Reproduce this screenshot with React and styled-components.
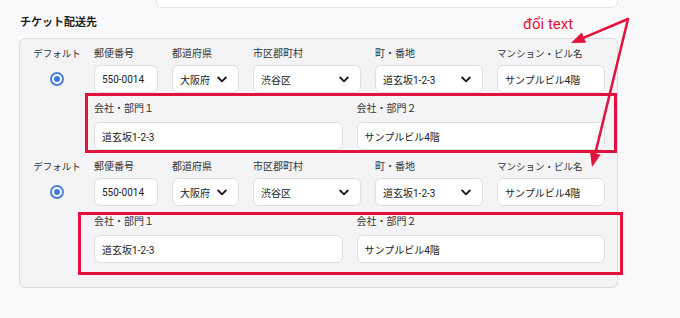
import styled, { createGlobalStyle } from 'styled-components';

const GlobalStyle = createGlobalStyle`
  html, body {
    margin: 0;
    padding: 0;
    background: #f9f9fb;
  }
  body {
    font-family: Roboto, "Noto Sans CJK JP", sans-serif;
    color: #2b2b2b;
  }
`;

const Page = styled.div`
  position: relative;
  width: 680px;
  height: 318px;
  overflow: hidden;
`;

const TopCard = styled.div`
  margin: -12px 0 0 156px;
  width: 462px;
  height: 20px;
  box-sizing: border-box;
  background: #fff;
  border: 1px solid #e2e2e6;
  border-radius: 6px;
`;

const Title = styled.div`
  margin: 7px 0 0 20px;
  font-size: 11px;
  line-height: 16px;
  font-weight: 700;
  color: #1f1f1f;
`;

const Box = styled.div`
  margin: 7px 0 0 19px;
  width: 599px;
  box-sizing: border-box;
  background: #f4f4f6;
  border: 1px solid #dcdce0;
  border-radius: 6px;
  padding: 7px 0 24px;
  display: flex;
  flex-direction: column;
  gap: 9px;
`;

const Entry = styled.div`
  display: flex;
`;

const DefaultCol = styled.div`
  width: 74px;
  display: flex;
  flex-direction: column;
  align-items: center;
  gap: 3px;
`;

const Label = styled.div`
  font-size: ${p => (p.$small ? 9.5 : 10)}px;
  line-height: 16px;
  color: #333;
  white-space: nowrap;
`;

const RadioCell = styled.div`
  height: 28px;
  display: flex;
  align-items: center;
`;

const Radio = styled.span`
  width: 14px;
  height: 14px;
  box-sizing: border-box;
  border-radius: 50%;
  border: 2px solid #4a80da;
  background: #fff;
  display: flex;
  align-items: center;
  justify-content: center;
  &::after {
    content: '';
    width: 6px;
    height: 6px;
    border-radius: 50%;
    background: #3f7ad8;
  }
`;

const Fields = styled.div`
  width: 511px;
  display: flex;
  flex-direction: column;
  gap: 8px;
`;

const AddressGrid = styled.div`
  display: grid;
  grid-template-columns: 64px 67px 108px 108px 108px;
  column-gap: 14px;
`;

const CompanyGrid = styled.div`
  display: grid;
  grid-template-columns: 1fr 1fr;
  column-gap: 14px;
`;

const Field = styled.div`
  display: flex;
  flex-direction: column;
  gap: ${p => p.$gap}px;
`;

const Control = styled.div`
  height: 28px;
  box-sizing: border-box;
  background: #fff;
  border: 1px solid #dedee2;
  border-radius: 6px;
  padding: 0 11px 0 7px;
  display: flex;
  align-items: center;
  justify-content: space-between;
  font-size: 10px;
  color: #222;
  white-space: nowrap;
`;

const Chevron = () => (
  <svg width="10" height="7" viewBox="0 0 10 7" fill="none">
    <path d="M1.2 1.5l3.8 3.8 3.8-3.8" stroke="#1e1e1e" strokeWidth="1.9" strokeLinecap="round" strokeLinejoin="round" />
  </svg>
);

const Mark = styled.div`
  position: absolute;
  box-sizing: border-box;
  border: 3px solid #e3123d;
  pointer-events: none;
`;

const Note = styled.div`
  position: absolute;
  left: 523px;
  top: 14px;
  font-size: 15px;
  line-height: 20px;
  color: #e3123d;
`;

const Arrows = styled.svg`
  position: absolute;
  left: 0;
  top: 0;
  pointer-events: none;
`;

const address = [
  { label: '郵便番号', value: '550-0014' },
  { label: '都道府県', value: '大阪府', select: true },
  { label: '市区郡町村', value: '渋谷区', select: true },
  { label: '町・番地', value: '道玄坂1-2-3', select: true },
  { label: 'マンション・ビル名', value: 'サンプルビル4階', small: true },
];

const company = [
  { label: '会社・部門１', value: '道玄坂1-2-3' },
  { label: '会社・部門２', value: 'サンプルビル4階' },
];

const AddressEntry = () => (
  <Entry>
    <DefaultCol>
      <Label $small>デフォルト</Label>
      <RadioCell>
        <Radio />
      </RadioCell>
    </DefaultCol>
    <Fields>
      <AddressGrid>
        {address.map(f => (
          <Field key={f.label} $gap={3}>
            <Label $small={f.small}>{f.label}</Label>
            <Control>
              <span>{f.value}</span>
              {f.select && <Chevron />}
            </Control>
          </Field>
        ))}
      </AddressGrid>
      <CompanyGrid>
        {company.map(f => (
          <Field key={f.label} $gap={5}>
            <Label>{f.label}</Label>
            <Control>{f.value}</Control>
          </Field>
        ))}
      </CompanyGrid>
    </Fields>
  </Entry>
);

const App = () => (
  <Page>
    <GlobalStyle />
    <TopCard />
    <Title>チケット配送先</Title>
    <Box>
      <AddressEntry />
      <AddressEntry />
    </Box>

    <Mark style={{ left: 85, top: 93, width: 532, height: 60 }} />
    <Mark style={{ left: 78, top: 212, width: 545, height: 63 }} />
    <Note>đổi text</Note>
    <Arrows width="680" height="318">
      <g stroke="#e3123d" strokeWidth="2.5" strokeLinecap="round">
        <line x1="628" y1="19" x2="584" y2="37.6" />
        <line x1="628" y1="19" x2="595.3" y2="153.4" />
      </g>
      <g fill="#e3123d">
        <polygon points="571,43 581.8,32.5 586,42.7" />
        <polygon points="592,167 590,152.1 600.6,154.7" />
      </g>
    </Arrows>
  </Page>
);

export default App;
